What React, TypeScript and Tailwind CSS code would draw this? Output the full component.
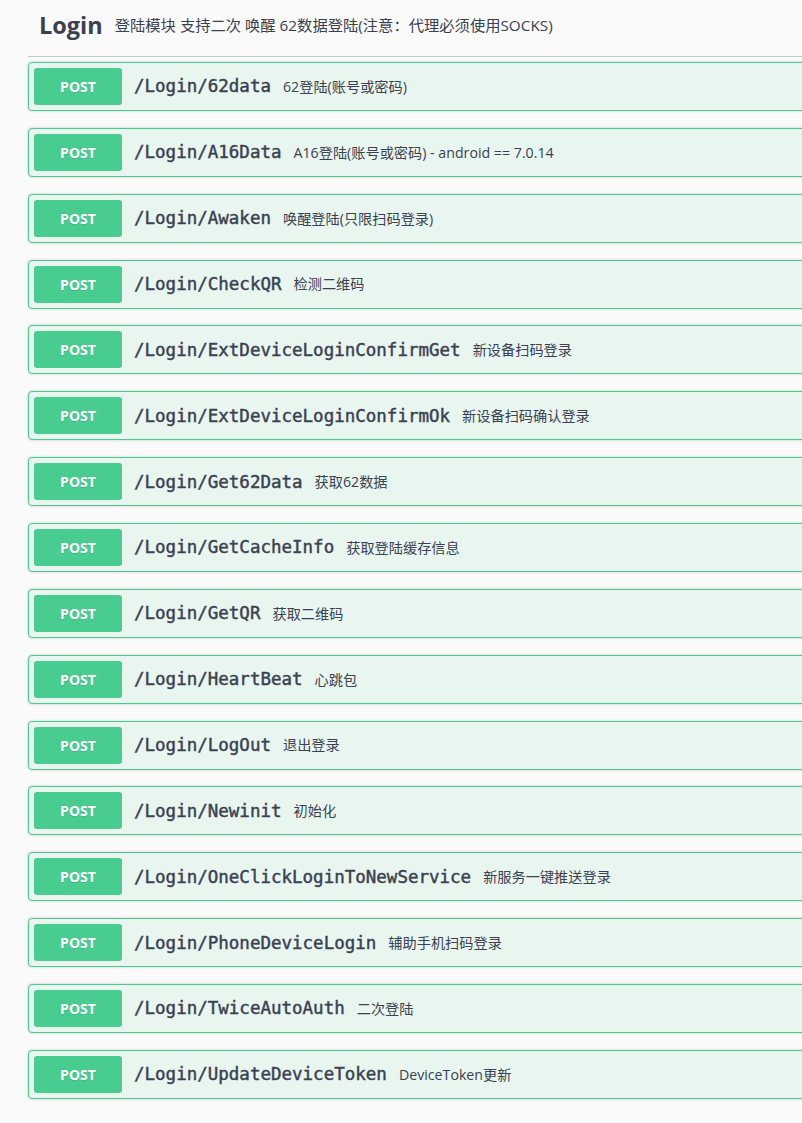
const endpoints = [
  { path: "/Login/62data", desc: "62登陆(账号或密码)" },
  { path: "/Login/A16Data", desc: "A16登陆(账号或密码) - android == 7.0.14" },
  { path: "/Login/Awaken", desc: "唤醒登陆(只限扫码登录)" },
  { path: "/Login/CheckQR", desc: "检测二维码" },
  { path: "/Login/ExtDeviceLoginConfirmGet", desc: "新设备扫码登录" },
  { path: "/Login/ExtDeviceLoginConfirmOk", desc: "新设备扫码确认登录" },
  { path: "/Login/Get62Data", desc: "获取62数据" },
  { path: "/Login/GetCacheInfo", desc: "获取登陆缓存信息" },
  { path: "/Login/GetQR", desc: "获取二维码" },
  { path: "/Login/HeartBeat", desc: "心跳包" },
  { path: "/Login/LogOut", desc: "退出登录" },
  { path: "/Login/Newinit", desc: "初始化" },
  { path: "/Login/OneClickLoginToNewService", desc: "新服务一键推送登录" },
  { path: "/Login/PhoneDeviceLogin", desc: "辅助手机扫码登录" },
  { path: "/Login/TwiceAutoAuth", desc: "二次登陆" },
  { path: "/Login/UpdateDeviceToken", desc: "DeviceToken更新" },
];

const sans = "font-['Open_Sans','Noto_Sans_CJK_SC',sans-serif]";

function Opblock({ path, desc }: { path: string; desc: string }) {
  return (
    <div className="flex h-[49px] items-center rounded-[4px] border border-[#49cc90] bg-[#e8f6ef] px-[5px] shadow-[0_0_3px_rgba(0,0,0,0.19)]">
      <span
        className={`${sans} flex h-[37px] w-[88px] shrink-0 items-center justify-center rounded-[3px] bg-[#49cc90] text-[14px] font-bold text-white [text-shadow:0_1px_0_rgba(0,0,0,0.1)]`}
      >
        POST
      </span>
      <span className="ml-3 font-['DejaVu_Sans_Mono',monospace] text-[17.5px] text-[#3b4151] [-webkit-text-stroke:0.45px_#3b4151]">
        {path}
      </span>
      <span className={`${sans} ml-3 text-[14.2px] text-[#3b4151]`}>{desc}</span>
    </div>
  );
}

export default function App() {
  return (
    <div className="h-[1123px] w-[802px] overflow-hidden bg-[#fafafa]">
      <div className="w-[820px] pl-[28px]">
        <div className="flex h-[57px] items-center border-b border-[#c3c5ca] pb-[5px] pl-[11px]">
          <h2 className={`${sans} text-[23.5px] font-bold text-[#3b4151]`}>Login</h2>
          <span className={`${sans} ml-3 text-[15.3px] text-[#3b4151]`}>
            登陆模块 支持二次 唤醒 62数据登陆(注意：代理必须使用SOCKS)
          </span>
        </div>
        <div className="mt-[5px] flex flex-col gap-[16.87px]">
          {endpoints.map((e) => (
            <Opblock key={e.path} path={e.path} desc={e.desc} />
          ))}
        </div>
      </div>
    </div>
  );
}
